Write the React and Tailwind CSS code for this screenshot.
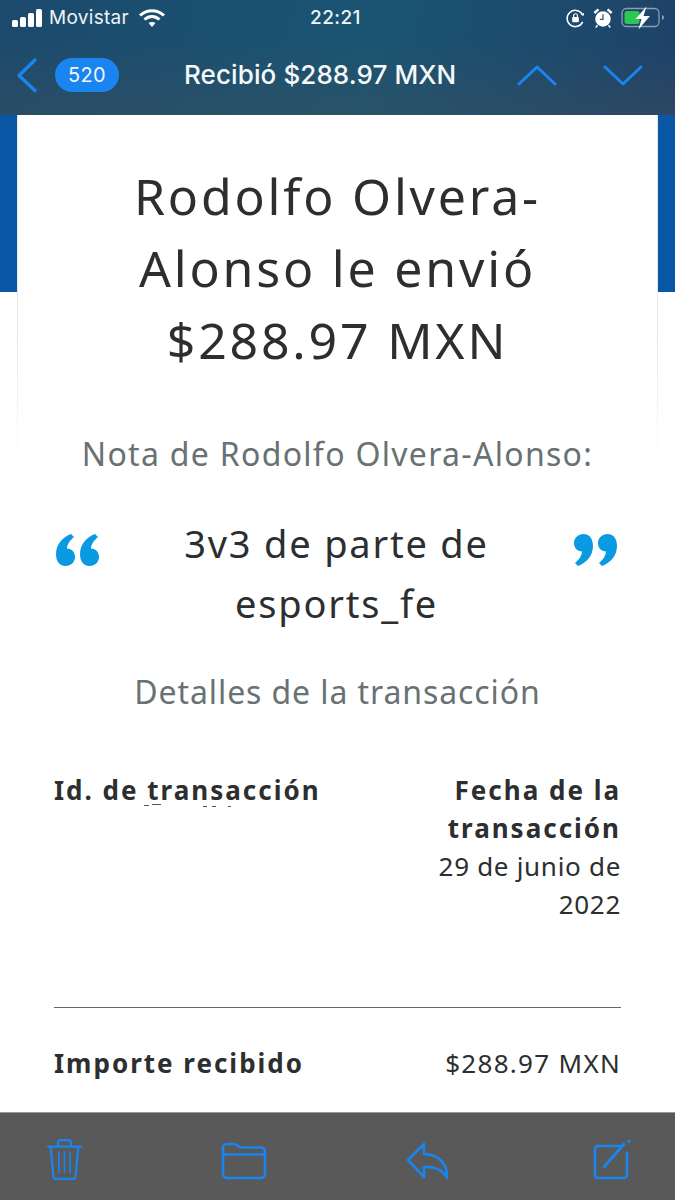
import React from "react";

const blue = "#1a84f0";

function Quote({ flip }) {
  return (
    <svg width="44" height="34" viewBox="0 0 44 34" className={flip ? "rotate-180" : ""}>
      <path fill="#0a9ae2" d="M16 1C8 4 1 11 1 21c0 8 4 12 9.500 12 5.500 0 9.500-4 9.500-9 0-5-3-8-8-8.500 0-4 3-8 7-11.500z" />
      <path fill="#0a9ae2" d="M40 1c-8 3-15 10-15 20 0 8 4 12 9.500 12 5.500 0 9.500-4 9.500-9 0-5-3-8-8-8.500 0-4 3-8 7-11.500z" />
    </svg>
  );
}

function StatusBar() {
  return (
    <div className="h-[36px] pl-[12px] pr-[10px] flex items-center justify-between text-white font-['Inter',sans-serif]">
      <div className="flex items-center w-[200px]">
        <svg width="31" height="20" viewBox="0 0 31 20" fill="#fff">
          <rect x="0" y="12" width="6" height="7" rx="1.5" />
          <rect x="8" y="9" width="6" height="10" rx="1.5" />
          <rect x="16" y="5" width="6" height="14" rx="1.5" />
          <rect x="24" y="1" width="6" height="18" rx="1.5" />
        </svg>
        <span className="ml-[6px] text-[19px] leading-[24px] tracking-[0.3px] text-[#eef3f6]">Movistar</span>
        <svg width="28" height="20" viewBox="0 0 28 20" className="ml-[9px]" fill="none" stroke="#fff" strokeWidth="3">
          <path d="M2 7.500C9 1 19 1 26 7.500" />
          <path d="M6.500 11.500C11 7.500 17 7.500 21.500 11.500" />
          <path d="M14 19l-3.500-4c2-1.500 5-1.500 7 0z" fill="#fff" stroke="none" />
        </svg>
      </div>
      <span className="text-[19px] leading-[24px] tracking-[0.4px] text-[#f2f5f7] font-medium mr-[6px]">22:21</span>
      <div className="flex items-center justify-end w-[200px]">
        <svg width="21" height="21" viewBox="0 0 22 22" fill="none" stroke="#fff" strokeWidth="1.600">
          <path d="M18.500 14.500A8.500 8.500 0 1 1 18 6.500" />
          <path d="M19.500 8.500l-3-1.500 3.500-2z" fill="#fff" stroke="none" />
          <rect x="7.500" y="9.500" width="7" height="5.500" rx="1" fill="#fff" stroke="none" />
          <path d="M9 9.500V8a2 2 0 0 1 4 0v1.500" strokeWidth="1.200" />
        </svg>
        <svg width="20" height="22" viewBox="0 0 22 24" className="ml-[7px]" fill="none">
          <circle cx="11" cy="13" r="8.500" fill="#fff" />
          <path d="M11 8v5.500H7.500" stroke="#34566e" strokeWidth="1.400" />
          <path d="M1.500 6.500L6 2.500M20.500 6.500L16 2.500" stroke="#fff" strokeWidth="2.600" />
          <path d="M5 20l-2 2.500M17 20l2 2.500" stroke="#fff" strokeWidth="1.600" />
        </svg>
        <svg width="44" height="24" viewBox="0 0 44 24" className="ml-[8px]" fill="none">
          <rect x="1" y="2.500" width="37" height="18" rx="4.500" stroke="#8a9eae" strokeWidth="1.300" />
          <rect x="3.500" y="5" width="15" height="13" rx="2.500" fill="#2dc653" />
          <path d="M41 9v5c1.500-.5 2-1.500 2-2.500s-.5-2-2-2.500z" fill="#8a9eae" />
          <path d="M25.500 0.500L14.500 13h6l-3 10.500L29 10h-6.500z" fill="#fff" />
        </svg>
      </div>
    </div>
  );
}

function NavBar() {
  return (
    <div className="h-[79px] pb-[2px] flex items-center text-white font-['Inter',sans-serif]">
      <svg width="22" height="36" viewBox="0 0 22 36" className="ml-[16px]" fill="none" stroke={blue} strokeWidth="3.400" strokeLinecap="round" strokeLinejoin="round">
        <path d="M19 3L3 18.500 19 33.500" />
      </svg>
      <div className="ml-[17px] w-[64px] h-[34px] rounded-full flex items-center justify-center text-[20px] tracking-[0.4px] bg-[#1a84f0] text-[#f0f6fc]">520</div>
      <div className="ml-[65px] w-[309px] text-[26px] leading-[32px] font-medium tracking-[0.1px] whitespace-nowrap text-[#f6f8fa]">Recibió $288.97 MXN</div>
      <svg width="40" height="24" viewBox="0 0 40 24" className="ml-[24px] mt-[3px]" fill="none" stroke={blue} strokeWidth="3" strokeLinecap="round" strokeLinejoin="round">
        <path d="M2 20L20 3 38 20" />
      </svg>
      <svg width="40" height="24" viewBox="0 0 40 24" className="ml-[46px] mt-[3px]" fill="none" stroke={blue} strokeWidth="3" strokeLinecap="round" strokeLinejoin="round">
        <path d="M2 3L20 20 38 3" />
      </svg>
    </div>
  );
}

function Toolbar() {
  return (
    <div className="h-[88px] shrink-0 bg-[#595959] border-t border-t-[#9a9a9a] flex items-start">
      <svg width="37" height="45" viewBox="0 0 40 48" className="ml-[46px] mt-[24px]" fill="none" stroke={blue} strokeWidth="2.400" strokeLinecap="round" strokeLinejoin="round">
        <path d="M2 10h36" />
        <path d="M13 10V6a3 3 0 0 1 3-3h8a3 3 0 0 1 3 3v4" />
        <path d="M5 10l3 32a3 3 0 0 0 3 3h18a3 3 0 0 0 3-3l3-32" />
        <path d="M14 16v22M20 16v22M26 16v22" strokeWidth="1.800" />
      </svg>
      <svg width="46" height="38" viewBox="0 0 46 38" className="ml-[138px] mt-[29px]" fill="none" stroke={blue} strokeWidth="2.600" strokeLinecap="round" strokeLinejoin="round">
        <path d="M2 6a4 4 0 0 1 4-4h7c3 0 4 3.500 7 3.500h20a4 4 0 0 1 4 4V32a4 4 0 0 1-4 4H6a4 4 0 0 1-4-4z" />
        <path d="M2 12.500h42" />
      </svg>
      <svg width="44" height="38" viewBox="0 0 44 38" className="ml-[139px] mt-[29px]" fill="none" stroke={blue} strokeWidth="2.600" strokeLinecap="round" strokeLinejoin="round">
        <path d="M18 2L2 18l16 17V25c10-1 19 3 23 11 1-14-9-24-23-24z" />
      </svg>
      <svg width="42" height="42" viewBox="0 0 42 42" className="ml-[141px] mt-[26px]" fill="none" stroke={blue} strokeLinecap="round" strokeLinejoin="round">
        <path d="M30 7H7a3 3 0 0 0-3 3v26a3 3 0 0 0 3 3h26a3 3 0 0 0 3-3V14" strokeWidth="2.600" />
        <path d="M13 28L33 5" strokeWidth="2.800" />
        <circle cx="38" cy="2.500" r="1.800" fill={blue} stroke="none" />
      </svg>
    </div>
  );
}

export default function App() {
  return (
    <div className="w-[675px] h-[1200px] overflow-hidden flex flex-col bg-white text-[#2c2e2f] font-['Noto_Sans','Open_Sans',sans-serif]">
      <header className="h-[115px] shrink-0 bg-[linear-gradient(to_bottom,rgba(70,80,90,0)_35%,rgba(70,80,90,0.35)_100%),linear-gradient(100deg,#1c4a6c_0%,#1a5472_55%,#1e4268_100%)]">
        <StatusBar />
        <NavBar />
      </header>

      <main className="flex-1 min-h-0 px-[17px] bg-[linear-gradient(to_bottom,#0a57a6_177px,#ffffff_177px)]">
        <div className="h-[355px] px-px bg-[linear-gradient(to_bottom,#e4e6e8_60%,#ffffff_100%)]">
          <div className="h-full bg-white flex flex-col items-center pt-[45px]">
            <h1 className="text-[50px] leading-[72px] text-center font-normal tracking-[2.800px]">
              Rodolfo Olvera-<br />Alonso le envió<br />$288.97 MXN
            </h1>
            <p className="mt-[56px] text-[32px] leading-[44px] text-[#687173] whitespace-nowrap tracking-[1.300px]">Nota de Rodolfo Olvera-Alonso:</p>
          </div>
        </div>

        <div className="mt-[43px] flex items-start justify-between pl-[38px] pr-[40px]">
          <div className="mt-[20px]"><Quote /></div>
          <p className="text-[38px] leading-[60px] text-center tracking-[1.800px]">3v3 de parte de<br />esports_fe</p>
          <div className="mt-[20px]"><Quote flip /></div>
        </div>

        <p className="mt-[37px] text-center text-[32px] leading-[44px] text-[#687173] tracking-[0.900px]">Detalles de la transacción</p>

        <div className="mt-[57px] px-[37px] flex justify-between text-[26px] leading-[38px] tracking-[0.700px]">
          <div>
            <div className="font-bold tracking-[2px]">Id. de transacción</div>
            <svg width="200" height="6" viewBox="0 0 200 6" className="block mt-[-6px] ml-[90px]" fill="#555">
              <rect x="0" y="2" width="5" height="1" />
              <rect x="8" y="1" width="9" height="1" />
              <rect x="59" y="3" width="4" height="1" />
              <rect x="68" y="3" width="4" height="1" />
              <rect x="84" y="3" width="3" height="1" />
            </svg>
          </div>
          <div className="text-right">
            <div className="font-bold tracking-[2px]">Fecha de la<br />transacción</div>
            <div>29 de junio de<br />2022</div>
          </div>
        </div>

        <div className="mt-[84px] mx-[37px] border-t border-t-[#666]" />

        <div className="mt-[36px] mx-[37px] flex justify-between items-center text-[26px] leading-[38px]">
          <span className="font-bold tracking-[2px]">Importe recibido</span>
          <span className="tracking-[1.300px]">$288.97 MXN</span>
        </div>
      </main>

      <Toolbar />
    </div>
  );
}
